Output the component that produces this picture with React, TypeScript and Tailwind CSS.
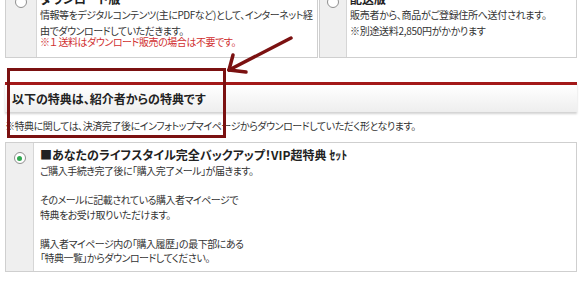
const jp = "font-['Noto_Sans_CJK_JP','Noto_Sans',sans-serif] [font-feature-settings:'palt']";

function Radio({ checked = false }: { checked?: boolean }) {
  return (
    <span className="flex h-[12px] w-[12px] items-center justify-center rounded-full border border-[#8f8f8f] bg-white">
      {checked && <span className="h-[5px] w-[5px] rounded-full bg-[#2fa84f]" />}
    </span>
  );
}

function OptionCard({
  width,
  side,
  title,
  children,
}: {
  width: string;
  side: string;
  title: string;
  children: React.ReactNode;
}) {
  return (
    <div className={`flex ${width} border border-[#cfcfcf] bg-white`}>
      <div className={`flex ${side} shrink-0 justify-center border-r border-[#d6d6d6] bg-[#efefef] pt-[9px]`}>
        <Radio />
      </div>
      <div className="pl-[3px] pt-[4px] pb-[10px]">
        <div className="h-[16px] text-[12px] leading-[16px] font-bold text-[#222]">{title}</div>
        {children}
      </div>
    </div>
  );
}

export default function App() {
  return (
    <div className={`relative h-[287px] w-[586px] overflow-hidden bg-white text-[#333] ${jp}`}>
      {/* top options */}
      <div className="-mt-[14px] flex items-stretch gap-[1px] pl-[5px]">
        <OptionCard width="w-[313px]" side="w-[31px]" title="ダウンロード版">
          <div className="text-[10px] tracking-[-0.45px] whitespace-nowrap">
            <div className="leading-[16px]">情報等をデジタルコンテンツ(主にPDFなど)として、インターネット経</div>
            <div className="mt-[2px] leading-[12px]">由でダウンロードしていただきます。</div>
            <div className="leading-[10px] text-[#d03030]">※１ 送料はダウンロード販売の場合は不要です。</div>
          </div>
        </OptionCard>
        <OptionCard width="w-[258px]" side="w-[27px]" title="配送版">
          <div className="text-[10px] tracking-[-0.3px] whitespace-nowrap">
            <div className="leading-[16px]">販売者から、商品がご登録住所へ送付されます。</div>
            <div className="mt-[2px] leading-[12px]">※別途送料2,850円がかかります</div>
          </div>
        </OptionCard>
      </div>

      {/* section header */}
      <div className="mt-[24px] ml-[5px] w-[572px] border-t-[3px] border-[#a31818] bg-gradient-to-b from-white to-[#eeeeee] shadow-[0_2px_2px_rgba(0,0,0,0.18)]">
        <div className="h-[27px] pl-[7px] text-[12px] leading-[27px] font-bold text-[#222]">
          以下の特典は、紹介者からの特典です
        </div>
      </div>

      <div className="mt-[7px] pl-[5px] text-[10px] leading-[14px] tracking-[-0.45px] whitespace-nowrap">
        ※特典に関しては、決済完了後にインフォトップマイページからダウンロードしていただく形となります。
      </div>

      {/* bonus card */}
      <div className="mt-[9px] ml-[5px] flex w-[572px] border border-[#cfcfcf] bg-white">
        <div className="flex w-[28px] shrink-0 justify-center border-r border-[#d6d6d6] bg-[#efefef] pt-[9px]">
          <Radio checked />
        </div>
        <div className="pl-[6px] pt-[4px] pb-[5px]">
          <div className="h-[16px] text-[12px] leading-[16px] font-bold text-[#222]">
            ■あなたのライフスタイル完全バックアップ！VIP超特典 ｾｯﾄ
          </div>
          <div className="mt-[1px] text-[10px] leading-[14.5px] tracking-[-0.5px] whitespace-nowrap">
            <div>ご購入手続き完了後に「購入完了メール」が届きます。</div>
            <div className="h-[14.5px]" />
            <div>そのメールに記載されている購入者マイページで</div>
            <div>特典をお受け取りいただけます。</div>
            <div className="h-[14.5px]" />
            <div>購入者マイページ内の「購入履歴」の最下部にある</div>
            <div>「特典一覧」からダウンロードしてください。</div>
          </div>
        </div>
      </div>

      {/* annotation overlay */}
      <div className="absolute left-[7px] top-[68px] h-[70px] w-[219px] border-[3px] border-[#7b1111]" />
      <svg className="absolute left-0 top-0" width="586" height="287" viewBox="0 0 586 287">
        <g stroke="#7b1111" strokeWidth="3.5" strokeLinecap="round" fill="none">
          <line x1="291" y1="38" x2="229" y2="70" />
          <line x1="229" y1="70" x2="233" y2="55" />
          <line x1="229" y1="70" x2="246" y2="72" />
        </g>
      </svg>
    </div>
  );
}
